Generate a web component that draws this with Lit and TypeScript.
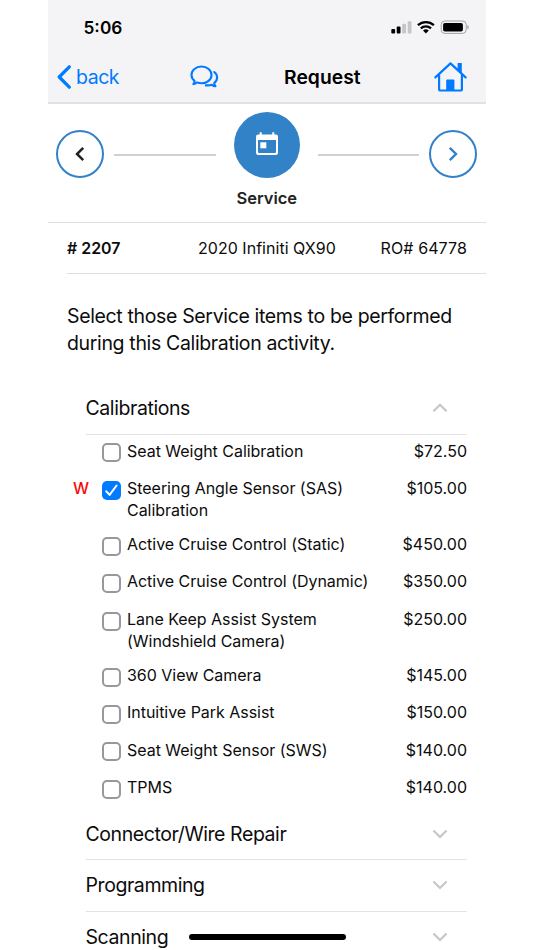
import { LitElement, html, css, svg } from "lit";
import { customElement } from "lit/decorators.js";

interface Item {
  name: string[];
  price: string;
  checked?: boolean;
}

const ITEMS: Item[] = [
  { name: ["Seat Weight Calibration"], price: "$72.50" },
  { name: ["Steering Angle Sensor (SAS)", "Calibration"], price: "$105.00", checked: true },
  { name: ["Active Cruise Control (Static)"], price: "$450.00" },
  { name: ["Active Cruise Control (Dynamic)"], price: "$350.00" },
  { name: ["Lane Keep Assist System", "(Windshield Camera)"], price: "$250.00" },
  { name: ["360 View Camera"], price: "$145.00" },
  { name: ["Intuitive Park Assist"], price: "$150.00" },
  { name: ["Seat Weight Sensor (SWS)"], price: "$140.00" },
  { name: ["TPMS"], price: "$140.00" },
];

const chevron = (up: boolean) => html`
  <svg class="chev" width="16" height="10" viewBox="0 0 16 10">
    ${up
      ? svg`<path d="M1.4 8.3 8 1.8l6.6 6.5" />`
      : svg`<path d="M1.4 1.5 8 8l6.6-6.5" />`}
  </svg>`;

@customElement("app-root")
export class AppRoot extends LitElement {
  static styles = css`
    :host {
      display: block;
      width: 534px;
      height: 950px;
      overflow: hidden;
      background: #fff;
      color: #0c0c0c;
      font-family: Inter, "Liberation Sans", sans-serif;
      font-size: 16px;
    }
    svg { display: block; fill: none; flex: none; }
    .phone {
      position: relative;
      width: 438px;
      height: 950px;
      margin-left: 48px;
      overflow: hidden;
      white-space: nowrap;
    }
    .top { height: 102px; background: #f4f4f7; border-bottom: 2px solid #e2e2e5; }
    .status { height: 54px; display: flex; align-items: center; padding: 0 17px 0 35.5px; }
    .time { flex: 1; font-size: 17.3px; font-weight: 600; line-height: 22px; color: #000; padding-top: 1px; }
    .nav { height: 46px; display: grid; grid-template-columns: 142px 94px 150px 1fr; align-items: center; }
    .back { display: flex; align-items: center; gap: 5px; padding-left: 9px; color: #007aff; font-size: 19.5px; letter-spacing: -0.45px; }
    .title { font-size: 19.3px; font-weight: 600; letter-spacing: 0.05px; color: #000; }
    .steps {
      height: 118px;
      border-bottom: 1px solid #dedede;
      display: grid;
      grid-template-columns: 48px 1fr 66px 1fr 48px;
      padding: 0 8.7px 0 8.2px;
    }
    .round {
      width: 48px;
      height: 48px;
      box-sizing: border-box;
      margin-top: 26px;
      border: 2px solid #3182ca;
      border-radius: 50%;
      display: grid;
      place-items: center;
    }
    .track { height: 2px; background: #d1d1d1; }
    .track.left { margin: 50px 18px 0 10px; }
    .track.right { margin: 50px 10px 0 18.5px; }
    .step { display: flex; flex-direction: column; align-items: center; padding-top: 8px; }
    .disc { width: 66px; height: 66px; border-radius: 50%; background: #3282c8; display: grid; place-items: center; }
    .disc svg { margin-bottom: 2px; }
    .label { margin-top: 9px; line-height: 22px; font-size: 16.5px; font-weight: 600; color: #222; }
    .vehicle {
      height: 50px;
      margin-left: 19px;
      padding-right: 19px;
      border-bottom: 1px solid #dedede;
      display: grid;
      grid-template-columns: 131px 1fr auto;
      align-items: center;
    }
    .num { font-weight: 600; font-size: 15.9px; }
    .car { letter-spacing: 0.03px; }
    .ro { letter-spacing: 0.1px; }
    .intro { margin: 29px 0 0 19px; font-size: 19.5px; line-height: 27px; letter-spacing: -0.35px; }
    .group { margin: 0 19px 0 37.5px; }
    .first { margin-top: 26px; }
    .head {
      height: 50.5px;
      border-bottom: 1px solid #e3e3e3;
      display: flex;
      align-items: center;
      justify-content: space-between;
      padding-right: 19px;
      font-size: 19.5px;
      letter-spacing: -0.42px;
    }
    .chev { stroke: #c7c7c9; stroke-width: 2.2; }
    .list { height: 369px; padding: 5px 19px 0 0; }
    .row {
      display: grid;
      grid-template-columns: 54px 25px 1fr auto;
      height: 37.45px;
      line-height: 22px;
    }
    .row.two { height: 56px; }
    .flag { padding-left: 25px; color: #f80808; font-weight: 500; }
    .box {
      width: 19px;
      height: 19px;
      box-sizing: border-box;
      margin-top: 3.8px;
      border: 2px solid #97979c;
      border-radius: 5px;
      background: #fff;
    }
    .box.on { border: 0; background: #007aff; }
    .name { letter-spacing: -0.03px; }
    .line { display: block; }
    .homebar {
      position: absolute;
      left: 141px;
      top: 934px;
      width: 157px;
      height: 6px;
      border-radius: 3px;
      background: #000;
    }
  `;

  private row(i: Item) {
    return html`<div class="row ${i.name.length > 1 ? "two" : ""}">
      <span class="flag">${i.checked ? "W" : ""}</span>
      <span class="box ${i.checked ? "on" : ""}">
        ${i.checked
          ? html`<svg width="19" height="19" viewBox="0 0 19 19">
              <path d="M4.2 10.2 7.6 13.9 14.6 4.5" stroke="#fff" stroke-width="2" stroke-linecap="round" stroke-linejoin="round" />
            </svg>`
          : ""}
      </span>
      <span class="name">${i.name.map((l) => html`<span class="line">${l}</span>`)}</span>
      <span class="price">${i.price}</span>
    </div>`;
  }

  render() {
    return html`
      <div class="phone">
        <header class="top">
          <div class="status">
            <span class="time">5:06</span>
            <svg width="78" height="16" viewBox="0 0 78 16">
              <g fill="#000">
                <rect x="0.3" y="10" width="3.8" height="4.6" rx="1" />
                <rect x="5.7" y="7.6" width="3.8" height="7" rx="1" />
              </g>
              <g fill="#c6c6c9">
                <rect x="11.2" y="4.8" width="3.8" height="9.8" rx="1" />
                <rect x="16.7" y="2.2" width="3.8" height="12.4" rx="1" />
              </g>
              <g stroke="#000" stroke-width="2.3">
                <path d="M26.900 6.100a12 12 0 0 1 16 0" />
                <path d="M29.800 9.300a7.700 7.700 0 0 1 10.200 0" />
              </g>
              <path d="M32 11.400a4.500 4.500 0 0 1 5.800 0L34.900 14.400z" fill="#000" />
              <rect x="50.2" y="2" width="25" height="12.4" rx="3.6" stroke="#a3a3a6" />
              <rect x="52.1" y="3.9" width="19.8" height="8.7" rx="1.8" fill="#000" />
              <path d="M76.400 6v4.400q1.300-.6 1.300-2.200T76.400 6z" fill="#a3a3a6" />
            </svg>
          </div>
          <div class="nav">
            <span class="back">
              <svg width="14" height="24" viewBox="0 0 14 24">
                <path d="M12.300 1.800 2.200 12l10.100 10.200" stroke="#007aff" stroke-width="3.200" stroke-linecap="round" stroke-linejoin="round" />
              </svg>
              <span>back</span>
            </span>
            <svg width="29" height="25" viewBox="0 0 29 25" stroke="#007aff" stroke-width="2.100" stroke-linejoin="round" stroke-linecap="round">
              <path d="M11.500 1.500c5.600 0 10 3.700 10 8.400s-4.400 8.400-10 8.400c-1.600 0-3.100-.3-4.500-.9-1 1.100-2.200 1.700-3.700 1.700.8-.9 1.300-2 1.200-3.300-1.900-1.500-3-3.600-3-5.900 0-4.700 4.400-8.400 10-8.400z" />
              <path d="M24.200 7c1.800 1.400 2.900 3.300 2.900 5.500s-1.100 4.200-2.900 5.600c0 1.200.5 2.300 1.300 3.200-1.500 0-2.700-.6-3.700-1.600-1.200.5-2.600.7-4 .7h-2" />
            </svg>
            <span class="title">Request</span>
            <svg width="33" height="32" viewBox="0 0 33 32">
              <g stroke="#007aff" stroke-width="2.200" stroke-linecap="round" stroke-linejoin="round">
                <path d="M1.400 16.400 16.500 2.400l15.100 14" />
                <path d="M5.100 14v14.400q0 1.100 1.200 1.100h20.400q1.200 0 1.200-1.100V14" />
              </g>
              <path d="M23.600 8.200V1.900h4.200v11z" fill="#007aff" />
              <path d="M12.200 29V19.600q0-1 1-1h6.200q1 0 1 1V29z" fill="#007aff" />
            </svg>
          </div>
        </header>

        <section class="steps">
          <span class="round">
            <svg width="10" height="16" viewBox="0 0 10 16"><path d="M8.200 1.800 2 8l6.200 6.200" stroke="#222" stroke-width="2.500" /></svg>
          </span>
          <span class="track left"></span>
          <div class="step">
            <span class="disc">
              <svg width="24" height="24" viewBox="0 0 24 24">
                <path fill="#fff" fill-rule="evenodd" d="M3.200 2.500h1.500V.3h2v2.200h10.600V.3h2v2.200h1.500q2.200 0 2.200 2.200v16.100q0 2.200-2.200 2.200H3.200Q1 23 1 20.800V4.700q0-2.200 2.200-2.200zM3 7.900v12.200q0 .9.900.9h16.200q.9 0 .9-.9V7.900z" />
                <rect x="5.300" y="10.300" width="6" height="6" fill="#fff" />
              </svg>
            </span>
            <span class="label">Service</span>
          </div>
          <span class="track right"></span>
          <span class="round">
            <svg width="10" height="16" viewBox="0 0 10 16"><path d="M1.800 1.800 8 8l-6.200 6.200" stroke="#3182ca" stroke-width="2.400" /></svg>
          </span>
        </section>

        <section class="vehicle">
          <span class="num"># 2207</span>
          <span class="car">2020 Infiniti QX90</span>
          <span class="ro">RO# 64778</span>
        </section>

        <div class="intro">
          <span class="line">Select those Service items to be performed</span>
          <span class="line">during this Calibration activity.</span>
        </div>

        <section class="group first">
          <div class="head"><span>Calibrations</span>${chevron(true)}</div>
        </section>
        <div class="list">${ITEMS.map((i) => this.row(i))}</div>
        ${["Connector/Wire Repair", "Programming", "Scanning"].map(
          (t) => html`<section class="group"><div class="head"><span>${t}</span>${chevron(false)}</div></section>`
        )}
        <div class="homebar"></div>
      </div>
    `;
  }
}
